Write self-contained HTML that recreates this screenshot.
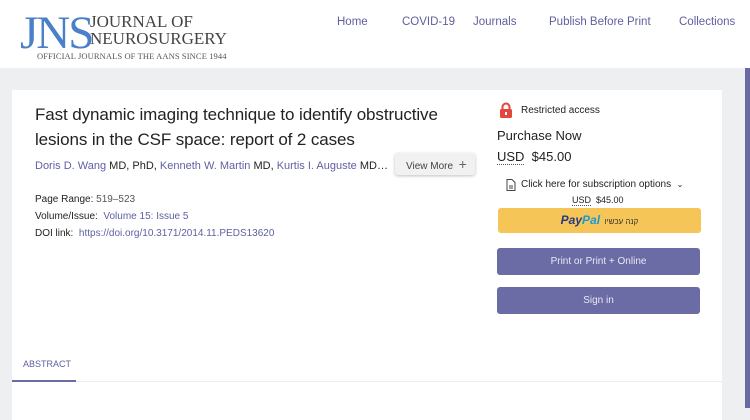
<!DOCTYPE html>
<html><head><meta charset="utf-8"><style>
*{margin:0;padding:0;box-sizing:border-box}
body{width:750px;height:408px;overflow:hidden;background:#eeeff1;font-family:"Liberation Sans",sans-serif;position:relative}
.hdr{position:absolute;left:0;top:0;width:750px;height:68px;background:#fff}
.nav a{position:absolute;top:16px;font-size:11.5px;color:#5f5f9d;text-decoration:none}
.card{position:absolute;left:12px;top:90px;width:710px;height:330px;background:#fff}
.strip{position:absolute;left:745px;top:68px;width:5px;height:340px;background:#6a6aa3}
.t{position:absolute;left:35px;top:102px;font-size:17px;line-height:25px;color:#222;width:440px;letter-spacing:-0.1px}
.lnk{color:#5f5fa3}
.au{position:absolute;left:35px;top:160px;font-size:11px;color:#222;width:355px;white-space:nowrap;overflow:hidden;text-overflow:ellipsis}
.vm{position:absolute;left:395px;top:153px;width:80px;height:22px;background:#f1f1f1;border-radius:3px;box-shadow:0 1px 3px rgba(0,0,0,.25);font-size:10px;color:#444;line-height:22px;padding-left:11px}
.meta{position:absolute;left:35px;font-size:10px;color:#222}
.meta span{color:#5f5fa3}
.r{position:absolute;font-size:12px;color:#222}
.btn{position:absolute;left:497px;width:203px;height:27px;background:#6b6ba5;border-radius:3px;color:#e8e8f4;font-size:10px;text-align:center;line-height:27px}
</style></head><body>
<div class="hdr">
<div style="position:absolute;left:20px;top:10px;font-family:'Liberation Serif',serif;font-size:47px;line-height:46px;color:#4a7fc9;letter-spacing:-2px">JNS</div>
<div style="position:absolute;left:90px;top:13px;font-family:'Liberation Serif',serif;font-size:17px;line-height:17px;color:#444">JOURNAL OF<br>NEUROSURGERY</div>
<div style="position:absolute;left:37px;top:51px;font-family:'Liberation Serif',serif;font-size:8.5px;color:#555;letter-spacing:.1px">OFFICIAL JOURNALS OF THE AANS SINCE 1944</div>
<div class="nav"><a style="left:337px">Home</a><a style="left:402px">COVID-19</a><a style="left:473px">Journals</a><a style="left:549px">Publish Before Print</a><a style="left:679px">Collections</a></div>
</div>
<div class="strip"></div>
<div class="card"></div>
<div class="t">Fast dynamic imaging technique to identify obstructive lesions in the CSF space: report of 2 cases</div>
<div class="au"><span class="lnk">Doris D. Wang</span> MD, PhD, <span class="lnk">Kenneth W. Martin</span> MD, <span class="lnk">Kurtis I. Auguste</span> MD, and others</div>
<div class="vm">View More &nbsp;<span style="font-size:14px;color:#666">+</span></div>
<div class="meta" style="top:194px">Page Range: <span style="color:#555">519–523</span></div>
<div class="meta" style="top:211px">Volume/Issue: &nbsp;<span>Volume 15: Issue 5</span></div>
<div class="meta" style="top:228px">DOI link: &nbsp;<span>https://doi.org/10.3171/2014.11.PEDS13620</span></div>
<svg style="position:absolute;left:499px;top:102px" width="14" height="16"><path d="M3.5 7V5a3.5 3.5 0 0 1 7 0v2" stroke="#e2463c" stroke-width="2" fill="none"/><rect x="1" y="7" width="12" height="9" rx="1.5" fill="#e2463c"/><rect x="6" y="10" width="2" height="3" fill="#fff"/></svg>
<div class="r" style="left:521px;top:105px;font-size:10px">Restricted access</div>
<div class="r" style="left:497px;top:128px;font-size:13px">Purchase Now</div>
<div class="r" style="left:497px;top:149px;font-size:13px"><span style="border-bottom:1px dotted #555">USD</span> &nbsp;$45.00</div>
<svg style="position:absolute;left:506px;top:179px" width="10" height="12"><path d="M1 .5h5l3 3V11.5H1z" fill="none" stroke="#444"/><path d="M3 7h4M3 9h4" stroke="#444"/></svg>
<div class="r" style="left:521px;top:179px;font-size:10px">Click here for subscription options &nbsp;<span style="font-size:8px">⌄</span></div>
<div class="r" style="left:572px;top:195px;font-size:9px"><span style="border-bottom:1px dotted #555">USD</span> &nbsp;$45.00</div>
<div style="position:absolute;left:498px;top:208px;width:203px;height:25px;background:#f6c558;border-radius:3px;text-align:center;line-height:25px;font-size:8px;color:#333"><b style="font-style:italic;font-size:12px;color:#253b80">Pay</b><b style="font-style:italic;font-size:12px;color:#179bd7">Pal</b> &nbsp;קנה עכשיו</div>
<div class="btn" style="top:248px">Print or Print + Online</div>
<div class="btn" style="top:287px">Sign in</div>
<div style="position:absolute;left:23px;top:359px;font-size:9px;color:#5f5fa3">ABSTRACT</div>
<div style="position:absolute;left:12px;top:381px;width:710px;height:1px;background:#ececec"></div>
<div style="position:absolute;left:12px;top:380px;width:64px;height:2px;background:#6b6ba5"></div>
</body></html>
